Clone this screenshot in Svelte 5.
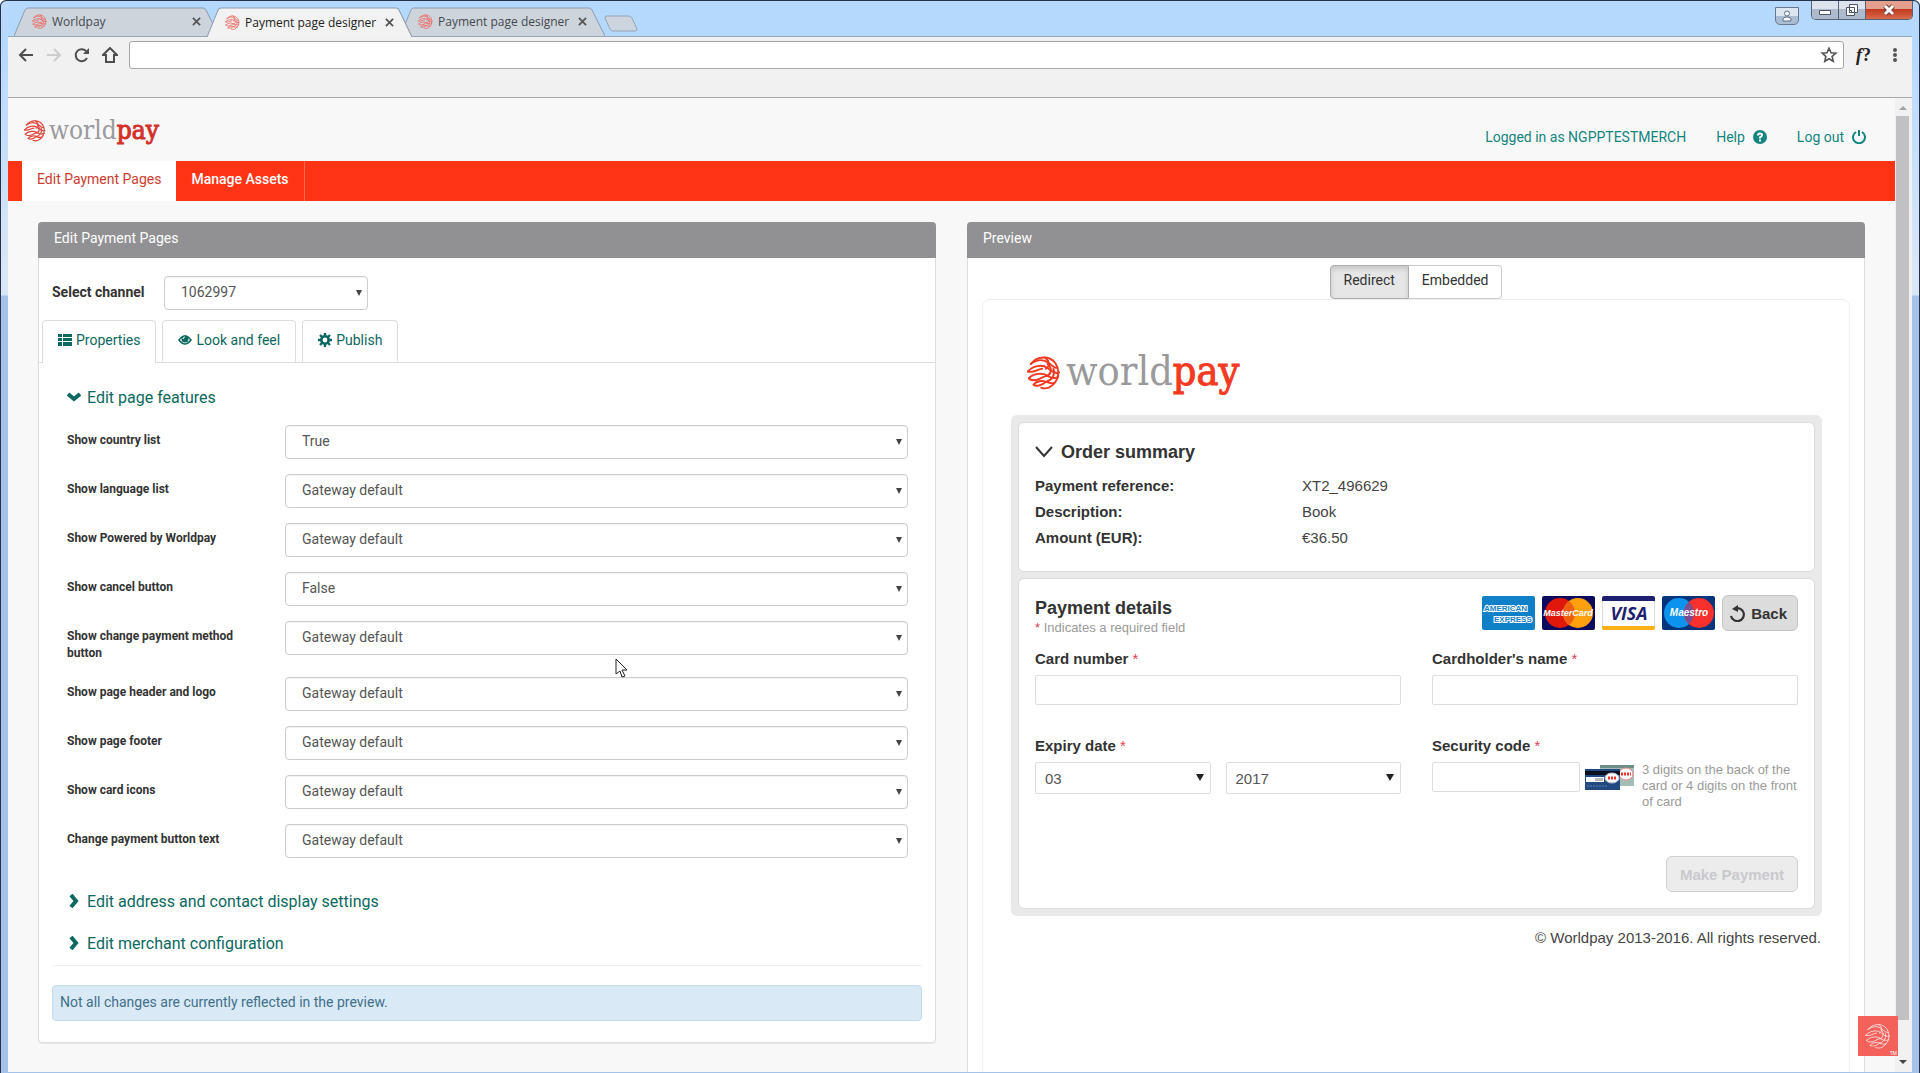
<script>
  const tabs = [
    { title: 'Worldpay', active: false },
    { title: 'Payment page designer', active: true },
    { title: 'Payment page designer', active: false }
  ];

  const choices = ['Gateway default', 'True', 'False'];
  let features = $state([
    { id: 'country', label: 'Show country list', value: 'True' },
    { id: 'language', label: 'Show language list', value: 'Gateway default' },
    { id: 'powered', label: 'Show Powered by Worldpay', value: 'Gateway default' },
    { id: 'cancel', label: 'Show cancel button', value: 'False' },
    { id: 'method', label: 'Show change payment method button', value: 'Gateway default' },
    { id: 'header', label: 'Show page header and logo', value: 'Gateway default' },
    { id: 'footer', label: 'Show page footer', value: 'Gateway default' },
    { id: 'icons', label: 'Show card icons', value: 'Gateway default' },
    { id: 'button', label: 'Change payment button text', value: 'Gateway default' }
  ]);

  const summary = [
    ['Payment reference:', 'XT2_496629'],
    ['Description:', 'Book'],
    ['Amount (EUR):', '€36.50']
  ];
</script>

{#snippet globe()}
  <svg class="globe" viewBox="0 0 36 36" fill="none" stroke="currentColor" stroke-width="2" stroke-linecap="round" stroke-linejoin="round" aria-hidden="true">
    <path d="M4 9C11 0 24 0 30 8c6 9 3 21-7 26-3 1-6 1-8 0" />
    <path d="M4 9c7-5 14-5 19-1 4 3 7 6 9 5" />
    <path d="M1 17c5-6 15-8 20-4 5 3 8 7 13 5" />
    <path d="M1 17c6 2 11-3 15-3" />
    <path d="M2 24c5-5 14-6 19-3 4 3 7 4 12 2" />
    <path d="M2 24c1 3 8 3 13 0s7-3 8-2" />
    <path d="M7 31c2-4 10-5 13-3 3 1 6 2 9 1" />
    <path d="M7 31c2 2 9 1 13-3" />
    <path d="M19 2c5 4 6 9 1 12M22 9c5 5 4 10-1 13M28 14c2 6-1 12-8 14" />
  </svg>
{/snippet}

{#snippet chevron()}
  <svg class="chev" viewBox="0 0 14 14" fill="none" stroke="currentColor" stroke-width="4" aria-hidden="true"><path d="M4 1l5 6-5 6" /></svg>
{/snippet}

<div class="window">
  <header class="strip">
    <div class="tabs" role="tablist">
      {#each tabs as tab}
        <div class="tab" class:active={tab.active}>
          <svg class="shape" viewBox="0 0 205 29" preserveAspectRatio="none" aria-hidden="true"><path d="M0 29L11 3Q12 1 14 1H189Q191 1 192 3L205 29" /></svg>
          {@render globe()}
          <button class="tab-title" role="tab" aria-selected={tab.active}>{tab.title}</button>
          <button class="tab-close" aria-label="Close tab">
            <svg viewBox="0 0 10 10" stroke="currentColor" stroke-width="2"><path d="M1 1l8 8M9 1L1 9" /></svg>
          </button>
        </div>
      {/each}
      <button class="new-tab" aria-label="New tab">
        <svg viewBox="0 0 34 17"><path d="M3 1H25Q27 1 28 3L33 14Q33 16 31 16H9Q7 16 6 14L1 3Q1 1 3 1Z" /></svg>
      </button>
    </div>
    <div class="controls">
      <button class="profile" aria-label="Profile">
        <svg viewBox="0 0 10 12" fill="#fff" stroke="#5d6c85"><circle cx="5" cy="3.5" r="2.5" /><path d="M1 11V9q0-2 4-2t4 2v2z" /></svg>
      </button>
      <div class="caption">
        <button aria-label="Minimise"><svg viewBox="0 0 14 12" fill="#fff" stroke="#4d5568"><path d="M1.500 6.500h11v4h-11z" /></svg></button>
        <button aria-label="Restore"><svg viewBox="0 0 14 12" fill="#fff" stroke="#4d5568"><path d="M4.500.5h8v8h-8zM1.500 3.500h8v8h-8zM4.500 6.500h2v2h-2z" /></svg></button>
        <button class="close" aria-label="Close"><svg viewBox="0 0 14 12"><path d="M3 2l8 8M11 2l-8 8" stroke="#6b3a3a" stroke-width="5" /><path d="M3 2l8 8M11 2l-8 8" stroke="#fff" stroke-width="3" /></svg></button>
      </div>
    </div>
  </header>

  <div class="toolbar">
    <div class="navicons">
      <button aria-label="Back"><svg viewBox="0 0 16 16"><path d="M15 8H2M8 2L2 8l6 6" /></svg></button>
      <button class="faded" aria-label="Forward"><svg viewBox="0 0 16 16"><path d="M1 8h13M8 2l6 6-6 6" /></svg></button>
      <button aria-label="Reload"><svg viewBox="0 0 16 16"><path d="M13 11A6 6 0 1 1 12.500 4.500" /><path d="M15 1v6H9z" fill="currentColor" stroke="none" /></svg></button>
      <button aria-label="Home"><svg viewBox="0 0 16 16"><path d="M8 1L1 8h3v7h8V8h3z" /></svg></button>
    </div>
    <div class="omnibox">
      <input type="text" aria-label="Address" />
      <button class="star" aria-label="Bookmark"><svg viewBox="0 0 16 16"><path d="M8 2l1.800 4 4.200.4-3.200 2.900.9 4.200L8 11.300l-3.700 2.200.9-4.200L2 6.400 6.200 6z" /></svg></button>
    </div>
    <button class="fq" aria-label="Font helper"><i>f</i>?</button>
    <button class="menu" aria-label="Menu"><svg viewBox="0 0 4 14" fill="#555"><circle cx="2" cy="2" r="2" /><circle cx="2" cy="7" r="2" /><circle cx="2" cy="12" r="2" /></svg></button>
  </div>

  <div class="viewport">
    <main class="page">
      <div class="masthead">
        <a class="logo" href="#home" aria-label="Worldpay">{@render globe()}<span>world<b>pay</b></span></a>
        <nav class="account">
          <a href="#account">Logged in as NGPPTESTMERCH</a>
          <a href="#help">Help
            <svg viewBox="0 0 14 14"><circle cx="7" cy="7" r="7" fill="currentColor" /><path d="M5 5.500Q5 3.500 7 3.500T9 5.300Q9 6.300 7 7.300V8.500M7 9.500v2" fill="none" stroke="#fff" stroke-width="2" /></svg>
          </a>
          <a href="#logout">Log out
            <svg viewBox="0 0 14 14" fill="none" stroke="currentColor" stroke-width="2"><path d="M4 2A6 6 0 1 0 10 2M7 0v6" /></svg>
          </a>
        </nav>
      </div>

      <nav class="bar">
        <a class="current" href="#edit">Edit Payment Pages</a>
        <a class="other" href="#assets">Manage Assets</a>
      </nav>

      <div class="columns">
        <section class="panel">
          <h2>Edit Payment Pages</h2>
          <div class="channel">
            <label for="channel">Select channel</label>
            <span class="sel"><select id="channel"><option>1062997</option></select></span>
          </div>
          <div class="pills" role="tablist">
            <button class="on" role="tab" aria-selected="true">
              <svg viewBox="0 0 14 14" fill="currentColor"><path d="M0 1h4v3H0zM5 1h9v3H5zM0 5h4v3H0zM5 5h9v3H5zM0 9h4v4H0zM5 9h9v4H5z" /></svg>Properties
            </button>
            <button role="tab" aria-selected="false">
              <svg viewBox="0 0 14 14"><path d="M1 7q6-8 12 0-6 8-12 0z" fill="none" stroke="currentColor" stroke-width="1.500" /><circle cx="7" cy="6" r="3.500" fill="currentColor" /><path d="M5 6q0-2 2-2" fill="none" stroke="#fff" /></svg>Look and feel
            </button>
            <button role="tab" aria-selected="false">
              <svg viewBox="0 0 14 14" fill="none" stroke="currentColor"><circle cx="7" cy="7" r="3.700" stroke-width="2.600" /><path d="M7 0v3M7 11v3M0 7h3M11 7h3M2 2l2 2M10 10l2 2M12 2l-2 2M4 10l-2 2" stroke-width="2.400" /></svg>Publish
            </button>
          </div>
          <div class="pane">
            <button class="fold open" aria-expanded="true">{@render chevron()}Edit page features</button>
            <div class="rows">
              {#each features as f (f.id)}
                <div class="row">
                  <label for={f.id}>{f.label}</label>
                  <span class="sel"><select id={f.id} bind:value={f.value}>{#each choices as c}<option>{c}</option>{/each}</select></span>
                </div>
              {/each}
            </div>
            <button class="fold" aria-expanded="false">{@render chevron()}Edit address and contact display settings</button>
            <button class="fold" aria-expanded="false">{@render chevron()}Edit merchant configuration</button>
          </div>
          <hr />
          <p class="alert">Not all changes are currently reflected in the preview.</p>
        </section>

        <section class="panel preview">
          <h2>Preview</h2>
          <div class="toggle">
            <button class="pressed" aria-pressed="true">Redirect</button>
            <button aria-pressed="false">Embedded</button>
          </div>
          <div class="frame">
            <div class="logo big" role="img" aria-label="Worldpay">{@render globe()}<span>world<b>pay</b></span></div>
            <div class="sheet">
              <section class="card order">
                <h3><svg class="down" viewBox="0 0 18 12" fill="none" stroke="#333" stroke-width="2"><path d="M1 1l8 9 8-9" /></svg>Order summary</h3>
                <dl>
                  {#each summary as [name, value]}<dt>{name}</dt><dd>{value}</dd>{/each}
                </dl>
              </section>
              <section class="card payment">
                <div class="head">
                  <div>
                    <h3>Payment details</h3>
                    <p class="required"><em>*</em> Indicates a required field</p>
                  </div>
                  <div class="brands">
                    <svg viewBox="0 0 53 34" role="img" aria-label="American Express"><rect width="53" height="34" rx="2" fill="#0f80c8" /><g font-family="Liberation Sans, sans-serif" font-weight="bold" font-size="8" fill="#1583c9" stroke="#fff" stroke-width="2" paint-order="stroke"><text x="2" y="15">AMERICAN</text><text x="12" y="26">EXPRESS</text></g></svg>
                    <svg viewBox="0 0 53 34" role="img" aria-label="MasterCard"><rect width="53" height="34" rx="2" fill="#0c0a5c" /><circle cx="18" cy="17" r="15" fill="#e0180c" /><circle cx="36" cy="17" r="15" fill="#ffa00f" /><path d="M27 5a15 15 0 0 1 0 24a15 15 0 0 1 0-24z" fill="#ee6010" /><text x="26" y="20" text-anchor="middle" font-family="Liberation Sans, sans-serif" font-style="italic" font-weight="bold" font-size="9" fill="#fff">MasterCard</text></svg>
                    <svg viewBox="0 0 53 34" role="img" aria-label="Visa"><rect x=".5" y=".5" width="52" height="33" rx="2" fill="#fff" stroke="#ddd" /><path d="M0 5V2q0-2 2-2h49q2 0 2 2v3z" fill="#1e1f70" /><path d="M0 30v2q0 2 2 2h49q2 0 2-2v-2z" fill="#fbb116" /><text x="27" y="24" text-anchor="middle" font-family="Open Sans, sans-serif" font-style="italic" font-weight="bold" font-size="18" fill="#1e1f70">VISA</text></svg>
                    <svg viewBox="0 0 53 34" role="img" aria-label="Maestro"><rect width="53" height="34" rx="2" fill="#05347c" /><circle cx="17" cy="17" r="15" fill="#0c93ee" /><circle cx="37" cy="17" r="15" fill="#f8302e" /><path d="M27 6a15 15 0 0 1 0 22a15 15 0 0 1 0-22z" fill="#7b4c90" /><text x="27" y="20" text-anchor="middle" font-family="Liberation Sans, sans-serif" font-style="italic" font-weight="bold" font-size="10" fill="#fff">Maestro</text></svg>
                    <button class="back"><svg viewBox="0 0 17 17" fill="none" stroke="#333" stroke-width="2.200"><path d="M6 3.500A6.500 6.500 0 1 1 2 11" /><path d="M9 0v7L3 4z" fill="#333" stroke="none" /></svg>Back</button>
                  </div>
                </div>
                <div class="fields">
                  <div class="field">
                    <label for="number">Card number <em>*</em></label>
                    <input id="number" type="text" />
                  </div>
                  <div class="field">
                    <label for="name">Cardholder's name <em>*</em></label>
                    <input id="name" type="text" />
                  </div>
                  <div class="field">
                    <label for="month">Expiry date <em>*</em></label>
                    <div class="pair">
                      <span class="sel plain"><select id="month"><option>03</option></select></span>
                      <span class="sel plain"><select aria-label="Expiry year"><option>2017</option></select></span>
                    </div>
                  </div>
                  <div class="field">
                    <label for="code">Security code <em>*</em></label>
                    <div class="security">
                      <input id="code" type="text" />
                      <svg viewBox="0 0 49 25" aria-hidden="true"><path d="M15 0h34v21H15z" fill="#a5bdb7" /><path d="M15 0h34v3H15z" fill="#6f8d87" /><ellipse cx="41" cy="9" rx="7" ry="6" fill="#fff" stroke="#e88" /><path d="M36 9h10" stroke="#e33" stroke-width="3" stroke-dasharray="2 1" /><path d="M0 4h35v21H0z" fill="#234a80" /><path d="M0 6h35v4H0z" fill="#0a1020" /><path d="M1 12h18v5H1z" fill="#fff" /><path d="M10 13h8v3h-8z" fill="#bbb" /><ellipse cx="27" cy="13" rx="7" ry="5" fill="#fff" stroke="#b9c4d8" /><path d="M23 13h8" stroke="#e33" stroke-width="3" stroke-dasharray="2 1" /><path d="M2 21h20" stroke="#5d83b5" stroke-dasharray="2 1" /></svg>
                      <span class="hint">3 digits on the back of the card or 4 digits on the front of card</span>
                    </div>
                  </div>
                </div>
                <button class="pay" disabled>Make Payment</button>
              </section>
            </div>
            <footer>© Worldpay 2013-2016. All rights reserved.</footer>
          </div>
        </section>
      </div>
    </main>

    <div class="scroll" aria-hidden="true">
      <svg viewBox="0 0 8 4"><path d="M0 4l4-4 4 4z" fill="#a3a3a3" /></svg>
      <div class="thumb"></div>
      <svg viewBox="0 0 8 4"><path d="M0 0l4 4 4-4z" fill="#444" /></svg>
    </div>
  </div>

  <div class="badge">{@render globe()}<small>TM</small></div>
  <svg class="cursor" viewBox="0 0 13 20" aria-hidden="true"><path d="M1 1v15l4-3 2 6 3-1-3-6h5z" fill="#fff" stroke="#222" /></svg>
</div>

<style>
  :global(body) { margin: 0; }
  * { box-sizing: border-box; }
  button, input, select { font: inherit; color: inherit; margin: 0; }
  button { border: 0; background: none; padding: 0; }
  a { text-decoration: none; color: inherit; }
  h2, h3, p, dl, dd { margin: 0; }
  em { font-style: normal; font-weight: normal; font-size: 15px; color: #e0405a; }

  .window {
    position: relative;
    display: flex;
    flex-direction: column;
    height: 100vh;
    overflow: hidden;
    padding: 0 8px 1px;
    border-top: 1px solid #26324a;
    border-radius: 6px 6px 0 0;
    background: linear-gradient(#bcd9fb 0, #b5d8fd 38px, #d8e6f6 260px, #d8e6f6 294px, #a4c2e8 295px);
    box-shadow: inset 1px 0 #26324a, inset -1px 0 #26324a;
    color: #333;
    font-family: Roboto, sans-serif;
    font-size: 14px;
  }

  .strip { display: flex; justify-content: space-between; height: 36px; flex: none; background: #b5d8fd; border-bottom: 1px solid #97a6b8; }
  .tabs { display: flex; align-items: flex-end; padding-left: 6px; }
  .tab { position: relative; display: flex; align-items: center; width: 205px; height: 29px; padding: 0 18px 0 18px; margin-right: -12px; color: #44494f; font-family: "Open Sans", sans-serif; font-size: 12px; }
  .tab :global(.globe) { position: relative; width: 15px; height: 15px; color: #ee6862; flex: none; }
  .shape { position: absolute; left: 0; top: 0; width: 100%; height: 100%; fill: #ced4dc; stroke: #8d9bad; }
  .tab.active { z-index: 1; color: #222; margin-bottom: -1px; height: 30px; }
  .tab.active .shape { fill: #f2f2f2; }
  .tab-title { position: relative; flex: 1; text-align: left; padding-left: 5px; white-space: nowrap; }
  .tab-close { position: relative; width: 9px; height: 9px; color: #555; display: flex; }
  .tab-close svg { width: 100%; }
  .new-tab { width: 34px; height: 17px; margin: 0 0 4px 11px; }
  .new-tab svg { display: block; fill: #ccd5de; stroke: #93a4b8; }
  .controls { display: flex; align-items: flex-start; gap: 12px; margin-right: -1px; }
  .profile { display: grid; place-items: center; width: 24px; height: 18px; margin-top: 6px; border: 1px solid #68788f; border-radius: 0 0 5px 5px; background: linear-gradient(#dce6f1 50%, #a9bdd3 50%); }
  .profile svg { width: 10px; height: 12px; }
  .caption { display: flex; height: 19px; border: 1px solid #56617a; border-top: 0; border-radius: 0 0 5px 5px; overflow: hidden; }
  .caption button { display: grid; place-items: center; width: 27px; background: linear-gradient(#dde3ec 45%, #adbacc 45%); border-right: 1px solid #56617a; }
  .caption button.close { width: 46px; border: 0; background: linear-gradient(#e3a08e 45%, #c2391d 45%, #d86a4c); }
  .caption svg { width: 14px; height: 12px; }

  .toolbar { display: flex; flex: none; align-items: flex-start; height: 61px; padding: 4px 15px 0 10px; background: #f1f1f1; border-bottom: 1px solid #a8a9ac; }
  .navicons { display: flex; gap: 12px; height: 28px; align-items: center; padding-right: 11px; }
  .navicons svg { display: block; width: 16px; height: 16px; fill: none; stroke: currentColor; stroke-width: 2; }
  .navicons button { color: #4e4e4e; }
  .navicons .faded { color: #cdcdcd; }
  .omnibox { flex: 1; display: flex; height: 28px; border: 1px solid #a6a6aa; border-radius: 3px; background: #fff; }
  .omnibox input { flex: 1; border: 0; background: none; outline: 0; }
  .star { width: 28px; display: grid; place-items: center; }
  .star svg { width: 18px; height: 18px; fill: none; stroke: #555; stroke-width: 1.500; }
  .fq { height: 28px; padding: 0 22px 0 12px; font-family: "Liberation Serif", serif; font-weight: bold; font-size: 18px; color: #222; }
  .menu { height: 28px; display: grid; place-items: center; }
  .menu svg { width: 4px; height: 14px; }

  .viewport { display: flex; flex: 1; min-height: 0; overflow: hidden; background: #f8f8f8; }
  .page { flex: 1; min-width: 0; }
  .scroll { width: 17px; padding: 8px 4px 8px 2px; display: flex; flex-direction: column; align-items: center; gap: 6px; background: #f1f1f1; }
  .scroll svg { width: 8px; height: 4px; }
  .thumb { width: 13px; flex: 1; margin-bottom: 34px; background: #c1c1c3; }

  .masthead { display: flex; justify-content: space-between; align-items: center; height: 63px; padding: 0 29px 0 16px; }
  .logo { display: flex; align-items: center; gap: 3px; color: #9a9a9c; font-family: "DejaVu Serif Condensed", "DejaVu Serif", serif; font-size: 26px; line-height: 30px; }
  .logo b { color: #d4312a; font-weight: normal; -webkit-text-stroke: 1px #d4312a; }
  .logo :global(.globe) { width: 22px; height: 23px; color: #e2473f; margin-top: 2px; }
  .account { display: flex; gap: 30px; color: #13857e; padding-top: 15px; }
  .account a { display: flex; align-items: center; gap: 8px; line-height: 18px; }
  .account svg { width: 14px; height: 14px; }

  .bar { display: flex; height: 40px; padding-left: 14px; background: #ff3415; line-height: 36px; }
  .bar a { padding: 0 15px; }
  .current { background: #fff; color: #cc3b30; }
  .other { color: #fff; font-weight: 500; border-right: 1px solid #ff6a50; }

  .columns { display: grid; grid-template-columns: minmax(0, 1fr) minmax(0, 1fr); gap: 31px; padding: 21px 30px 0; align-items: start; }
  .panel { background: #fff; border: 1px solid #dddddf; border-radius: 4px; box-shadow: 0 1px 1px #0001; }
  .panel h2 { margin: -1px -1px 0; height: 36px; padding-left: 16px; border-radius: 4px 4px 0 0; background: #919193; color: #fff; font-size: 14px; font-weight: normal; line-height: 33px; }

  .channel { display: flex; align-items: flex-start; gap: 17px; padding: 18px 13px 10px; }
  .channel label { font-weight: bold; width: 95px; line-height: 32px; white-space: nowrap; }
  .channel .sel { width: 204px; }
  .sel { position: relative; display: block; }
  .sel select { display: block; width: 100%; height: 34px; padding: 0 16px 2px; border: 1px solid #ccc; border-radius: 4px; background: #fff; box-shadow: inset 0 1px 1px #0000000d; color: #555; appearance: none; }
  .sel::after { content: ""; position: absolute; right: 6px; top: 14px; border: solid transparent; border-width: 6px 3px 0; border-top-color: #444; pointer-events: none; }

  .pills { display: flex; gap: 6px; padding: 0 3px; border-bottom: 1px solid #ddd; }
  .pills button { display: flex; align-items: center; gap: 4px; height: 42px; padding: 0 15px 4px; border: 1px solid #ddd; border-bottom: 0; border-radius: 4px 4px 0 0; color: #0c6860; }
  .pills svg { width: 14px; height: 14px; }
  .pills .on { background: #fff; margin-bottom: -1px; height: 43px; padding-bottom: 5px; }

  .pane { padding: 20px 27px 0 28px; color: #0c6860; }
  .fold { display: flex; align-items: center; gap: 6px; height: 28px; margin-bottom: 14px; font-size: 16px; }
  .fold :global(.chev) { width: 14px; height: 14px; }
  .fold.open :global(.chev) { transform: rotate(90deg); }
  .rows { margin-bottom: 29px; color: #333; }
  .row { display: grid; grid-template-columns: 180px minmax(0, 1fr); column-gap: 38px; align-items: start; margin-bottom: 15px; }
  .row label { padding-top: 7px; font-size: 12px; font-weight: bold; line-height: 17px; }
  hr { margin: -6px 13px 0; border: 0; border-top: 1px solid #f0eff5; }
  .alert { margin: 19px 13px 21px; height: 36px; padding: 0 7px; border: 1px solid #c3dcec; border-radius: 4px; background: #d9e9f5; color: #40708d; line-height: 32px; }

  .preview { min-height: 900px; }
  .toggle { display: flex; justify-content: center; padding-top: 7px; }
  .toggle button { height: 34px; padding: 0 13px 4px; border: 1px solid #ccc; border-radius: 0 4px 4px 0; }
  .toggle .pressed { background: #e6e6e6; border-color: #adadad; border-radius: 4px 0 0 4px; box-shadow: inset 0 3px 5px #0002; }
  .toggle button + button { border-left: 0; }
  .frame { margin: 0 14px; min-height: 860px; padding: 49px 27px 0 28px; border: 1px solid #eee; border-radius: 8px; font-family: "Liberation Sans", sans-serif; font-size: 15px; }
  .logo.big { gap: 5px; padding-left: 16px; height: 45px; font-size: 41px; line-height: 45px; }
  .big b { color: #f23a22; -webkit-text-stroke-color: #f23a22; }
  .big :global(.globe) { width: 34px; height: 35px; color: #f23a22; }
  .sheet { margin-top: 21px; padding: 7px; display: grid; gap: 6px; border-radius: 6px; background: #e9e9e9; }
  .card { background: #fff; border: 1px solid #dcdcdc; border-radius: 6px; padding: 0 16px; }
  .card h3 { font-size: 18px; line-height: 22px; color: #333; }
  .order { padding-top: 18px; padding-bottom: 20px; }
  .order h3 { display: flex; align-items: center; gap: 8px; }
  .down { width: 18px; height: 12px; }
  dl { display: grid; grid-template-columns: 267px 1fr; margin-top: 10px; line-height: 26px; }
  dt { font-weight: bold; }
  dd { color: #444; }
  .payment { display: flex; flex-direction: column; padding-top: 16px; padding-bottom: 16px; }
  .head { display: flex; justify-content: space-between; align-items: flex-start; }
  .head h3 { margin-top: 2px; }
  .required { font-size: 13px; line-height: 18px; color: #9a9a9a; }
  .required em { font-size: 13px; }
  .brands { display: flex; align-items: center; gap: 7px; }
  .brands > svg { width: 53px; height: 34px; }
  .back { display: flex; align-items: center; gap: 5px; height: 36px; padding: 0 10px 0 6px; border: 1px solid #c4c4c4; border-radius: 6px; background: #dcdcdc; font-weight: bold; }
  .back svg { width: 17px; height: 17px; }
  .fields { display: grid; grid-template-columns: minmax(0, 1fr) minmax(0, 1fr); gap: 32px 31px; margin-top: 13px; }
  .field label { display: block; height: 25px; line-height: 18px; font-weight: bold; white-space: nowrap; }
  .field input { display: block; width: 100%; height: 30px; border: 1px solid #dedee0; border-radius: 2px; background: #fff; padding: 0 8px; }
  .pair { display: grid; grid-template-columns: 1fr 1fr; gap: 15px; }
  .plain select { height: 32px; padding: 0 9px; border-color: #dedee0; border-radius: 2px; box-shadow: none; }
  .plain::after { top: 12px; right: 7px; border-width: 7px 4px 0; border-top-color: #222; }
  .security { display: flex; align-items: flex-start; }
  .security input { width: 148px; flex: none; }
  .security svg { width: 49px; height: 25px; margin: 3px 8px 0 5px; flex: none; }
  .hint { font-size: 13px; line-height: 16px; color: #9a9a9a; }
  .pay { align-self: flex-end; height: 36px; width: 132px; margin-top: 46px; border: 1px solid #d0d0d2; border-radius: 6px; background: #ececed; color: #c9c9cb; font-weight: bold; white-space: nowrap; }
  footer { padding: 13px 1px 0; line-height: 18px; text-align: right; color: #444; }

  .badge { position: absolute; right: 22px; bottom: 17px; width: 40px; height: 40px; padding: 7px; background: #f4605a; color: #fff; }
  .badge :global(.globe) { width: 26px; height: 26px; stroke-width: 1; }
  .badge small { position: absolute; right: 1px; bottom: 0; font-size: 5px; line-height: 6px; }
  .cursor { position: absolute; left: 615px; top: 657px; width: 13px; height: 20px; }
</style>
